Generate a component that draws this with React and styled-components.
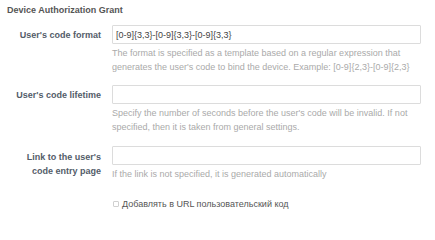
import React from "react";
import styled, { createGlobalStyle } from "styled-components";

const GlobalStyle = createGlobalStyle`
  body {
    margin: 0;
    background: #fff;
    font-family: "Liberation Sans", Arial, sans-serif;
  }
`;

const Wrap = styled.div`
  padding: 4px 14px 0 7px;
`;

const Title = styled.div`
  font-size: 9px;
  font-weight: 700;
  color: #555;
  line-height: 13px;
  margin-bottom: 8px;
`;

const Row = styled.div`
  display: grid;
  grid-template-columns: 105px 1fr;
  margin-bottom: ${(p) => p.gap || 11}px;
`;

const Label = styled.label`
  text-align: right;
  padding-right: 11px;
  font-size: 9px;
  font-weight: 700;
  color: #535c69;
  line-height: 14px;
  padding-top: ${(p) => p.top || 3}px;
`;

const Field = styled.div`
  display: flex;
  flex-direction: column;
`;

const Input = styled.input`
  box-sizing: border-box;
  width: 100%;
  height: 19px;
  border: 1px solid #dcdcdc;
  border-radius: 1px;
  padding: 0 3px;
  font-family: "Liberation Sans", Arial, sans-serif;
  font-size: 9px;
  color: #444;
  outline: none;
`;

const Help = styled.div`
  font-size: 9px;
  color: #aaa;
  line-height: 13.5px;
  margin-top: 3px;
`;

const CheckRow = styled.div`
  display: flex;
  align-items: center;
  gap: 3px;
  padding-left: 106px;
  font-size: 9px;
  line-height: 14px;
  color: #555;
`;

const Box = styled.span`
  width: 4px;
  height: 4px;
  border: 1px solid #d0d0d0;
  border-radius: 1px;
  display: inline-block;
`;

export default function App() {
  return (
    <Wrap>
      <GlobalStyle />
      <Title>Device Authorization Grant</Title>
      <Row>
        <Label>User's code format</Label>
        <Field>
          <Input defaultValue="[0-9]{3,3}-[0-9]{3,3}-[0-9]{3,3}" />
          <Help>
            The format is specified as a template based on a regular expression that
            generates the user's code to bind the device. Example: [0-9]{"{2,3}"}-[0-9]{"{2,3}"}
          </Help>
        </Field>
      </Row>
      <Row gap={12}>
        <Label>User's code lifetime</Label>
        <Field>
          <Input />
          <Help>
            Specify the number of seconds before the user's code will be invalid. If not
            specified, then it is taken from general settings.
          </Help>
        </Field>
      </Row>
      <Row gap={15}>
        <Label top={4}>
          Link to the user's
          <br />
          code entry page
        </Label>
        <Field>
          <Input />
          <Help>If the link is not specified, it is generated automatically</Help>
        </Field>
      </Row>
      <CheckRow>
        <Box />
        <span>Добавлять в URL пользовательский код</span>
      </CheckRow>
    </Wrap>
  );
}
